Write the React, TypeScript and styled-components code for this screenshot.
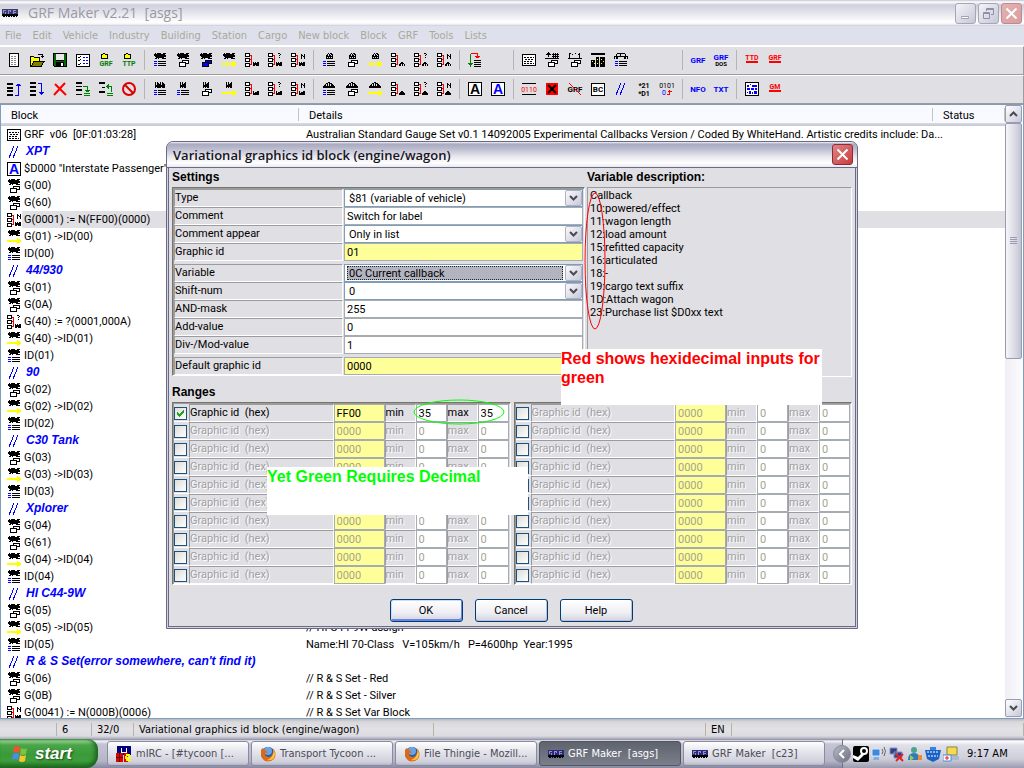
import React from "react";
import styled, { createGlobalStyle, css } from "styled-components";

const GlobalStyle = createGlobalStyle`
  * { box-sizing: border-box; }
  html, body { margin: 0; padding: 0; }
  body { background: #e0dfe3; color: #000; overflow: hidden; }
  button, input, select { font: inherit; color: inherit; margin: 0; padding: 0; border-radius: 0; }
`;

const SANS = `"Liberation Sans", Arial, sans-serif`;
const TEXT = `Roboto, "Liberation Sans", sans-serif`;
const TAHOMA = `"DejaVu Sans Condensed", "DejaVu Sans", sans-serif`;
const CAPTION = `"Open Sans", "Noto Sans", sans-serif`;

/* ---------- pixel drawings ---------- */

function runs(rows: string[], x: number, y: number) {
  let d = "";
  rows.forEach((row, j) => {
    for (const m of row.matchAll(/#+/g)) {
      d += `M${x + (m.index ?? 0)} ${y + j}h${m[0].length}v1h-${m[0].length}z`;
    }
  });
  return d;
}

type BitsProps = { rows: string[]; x?: number; y?: number; fill?: string };
const Bits = ({ rows, x = 0, y = 0, fill = "#000" }: BitsProps) => <path d={runs(rows, x, y)} fill={fill} />;

type Subject = "train" | "factory" | "works" | "house" | "station";

const BIG: Record<Subject, string[]> = {
  train: [".#.####..###", "###########.", "############", ".###########", "..########..", ".##.#...####"],
  works: [".#.#..#.#...", ".#.##.#.##..", ".#.####.###.", ".##########.", ".##########.", ".#.####.###."],
  factory: ["...#.#..#...", "...#.#.##...", "...#.####...", "...######...", "...######...", "...#.#.##..."],
  house: [".....#.##...", "....#.#.##..", "...##.##.#..", "...#######..", "...#.#.#.#..", "...#######.."],
  station: [".....##.....", "...##.###...", "..#.#.#.##..", ".##.#.#.###.", "############", "############"],
};
const SMALL: Record<Subject, string[]> = {
  train: ["#.#.##", "######", "######", "##.###"],
  works: ["#..#.#", "#.####", "######", "######"],
  factory: ["#...##", "#.####", "######", "######"],
  house: ["..##..", ".####.", "##.#.#", "##.#.#"],
  station: ["..##..", ".####.", "######", "######"],
};

type Kind = "list" | "cards" | "blueCards" | "arrow" | "tree" | "treeQ" | "treeN";

const IconSvg = styled.svg`
  display: block;
  width: 16px;
  height: 16px;
  shape-rendering: crispEdges;
  overflow: visible;
`;

const Lines = () => (
  <>
    <path d="M2 9h3v1h-3zM2 11h3v1h-3zM2 13h3v1h-3z" fill="#00f" />
    <path d="M6 9h8v1H6zM6 11h8v1H6zM6 13h8v1H6z" />
  </>
);
const Cards = ({ fill = "#fff" }: { fill?: string }) => (
  <>
    <path d="M7.500 8.500h6v3h-6z" fill={fill} stroke="#000" />
    <path d="M4.500 10.500h6v4h-6z" fill={fill} stroke="#000" />
  </>
);

function BlockIcon({ subject, kind }: { subject: Subject; kind: Kind }) {
  const tree = kind.startsWith("tree");
  return (
    <IconSvg viewBox="0 0 16 16" aria-hidden="true">
      {!tree && <Bits rows={BIG[subject]} x={2} y={1} />}
      {kind === "list" && <Lines />}
      {kind === "cards" && <Cards />}
      {kind === "blueCards" && <Cards fill="#00f" />}
      {kind === "arrow" && <path d="M1 11h10V9h1v1h2v1h1v2h-1v1h-2v1h-1v-2H1z" fill="#ff0" />}
      {tree && (
        <>
          <path d="M1.500 1.500h4v3h-4zM1.500 6.500h4v3h-4zM1.500 11.500h4v3h-4z" fill="#fff" stroke="#000" />
          <path d="M6 3h2v10H6v-1h1V8H6V7h1V4H6z" fill="#f00" />
          <Bits rows={SMALL[subject]} x={9} y={10} />
          {kind === "treeQ" && <Bits rows={["##.", "..#", ".#.", "...", ".#."]} x={11} y={1} />}
          {kind === "treeN" && <Bits rows={["#..#", "##.#", "#.##", "#..#", "#..#"]} x={11} y={2} />}
        </>
      )}
    </IconSvg>
  );
}

const Glyph = ({ children }: { children: React.ReactNode }) => (
  <IconSvg viewBox="0 0 16 16" aria-hidden="true">{children}</IconSvg>
);

const TINY = { fontFamily: "Roboto, sans-serif", fontWeight: "bold", textAnchor: "middle" as const };

type LabelIconProps = { text: string; color: string; size?: number; y?: number; bar?: boolean; children?: React.ReactNode };
const LabelIcon = ({ text, color, size = 8, y = 11, bar, children }: LabelIconProps) => (
  <Glyph>
    <text {...TINY} x="8" y={y} fontSize={size} fill={color}>{text}</text>
    {bar && <path d="M2 9h12v2H2z" fill="#f00" />}
    {children}
  </Glyph>
);

const FolderIcon = ({ text }: { text: string }) => (
  <Glyph>
    <path d="M3.500 2.500h1l1-1h1l1 1h2v4h-6z" fill="#ff0" stroke="#000" />
    <text {...TINY} x="8" y="14" fontSize="7" fill="#008000">{text}</text>
  </Glyph>
);

const icons: Record<string, React.ReactNode> = {
  new: <Glyph><path d="M3.500 1.500h9v13h-9z" fill="#fff" stroke="#000" /><path d="M5 4.500h6M5 6.500h6M5 8.500h6M5 10.500h6M5 12.500h6" stroke="#888" strokeDasharray="2 1" /></Glyph>,
  open: <Glyph><path d="M1.500 14.500v-10h3l1 1h5v4" fill="#ff0" stroke="#000" /><path d="M2 14.500l3-5h10l-3 5z" fill="#808000" stroke="#000" /><path d="M9 2.500h4v3M12 4.500h3" fill="none" stroke="#000" /></Glyph>,
  save: <Glyph><path d="M1 1h14v14H2l-1-1z" fill="#000" /><path d="M2 2h2v7h8V2h2v12h-2v-4H4v4H2z" fill="#006a00" /><path d="M4 2h8v6H4z" fill="#e8e8e8" /><path d="M9 11h2v3H9z" fill="#fff" /></Glyph>,
  props: <Glyph><path d="M1.500 2.500h13v12h-13z" fill="#fff" stroke="#000" /><path d="M3 5l1 1 2-2M3 8l1 1 2-2M3 12l1 1 2-2" stroke="#000" fill="none" /><path d="M8 5.500h5M8 8.500h5M8 11.500h5" stroke="#00f" strokeDasharray="2 1" /></Glyph>,
  grfFolder: <FolderIcon text="GRF" />,
  ttpFolder: <FolderIcon text="TTP" />,
  up: <Glyph><path d="M1 2h6v2H1zM1 6h6v2H1zM1 9h6v2H1zM1 13h6v2H1z" /><path d="M9 14.500h3.500V3M10 4.500h5M11 3.500h3" stroke="#00f" fill="none" /></Glyph>,
  down: <Glyph><path d="M1 1h6v2H1zM1 5h6v2H1zM1 9h6v2H1zM1 13h6v2H1z" /><path d="M9 2.500h3.500V14M10 11.500h5M11 12.500h3" stroke="#00f" fill="none" /></Glyph>,
  cross: <Glyph><path d="M3 3l11 11M13 2L2 14" stroke="#f00" strokeWidth="2" fill="none" shapeRendering="auto" /></Glyph>,
  insert: <Glyph><path d="M1 1h6v2H1zM1 5h6v1H1zM1 8h6v2H1zM1 13h6v1H1z" /><path d="M8 5.500h4.500V10M10 9.500h5M11 10.500h3M9 12.500h6M9 14.500h6" stroke="#008000" fill="none" /></Glyph>,
  extract: <Glyph><path d="M1 1h6v2H1zM1 10h6v2H1zM4 6h3v1H4z" /><path d="M8 5.500h5.500V11M10 3v5M9 4v3M9 12.500h6M9 14.500h6" stroke="#008000" fill="none" /></Glyph>,
  stop: <Glyph><g shapeRendering="auto" fill="none" stroke="#d80000" strokeWidth="2"><circle cx="8" cy="8" r="6" /><path d="M4 4l8 8" /></g></Glyph>,
  flow: <Glyph><path d="M3.500 2v10M1 11.500h5M2 12.500h3M3.500 13v2" stroke="#008000" fill="none" /><path d="M4 1.500h6.500V6M8 4.500h5M9 5.500h3" stroke="#f00" fill="none" /><path d="M7 8h7v1H7zM7 10h7v1H7zM7 12h7v1H7zM7 14h7v1H7z" /></Glyph>,
  info: <Glyph><path d="M1.500 2.500h13v11h-13z" fill="#fff" stroke="#000" /><path d="M3 5.500h10M4 7.500h9M3 9.500h9M3 11.500h10" stroke="#000" strokeDasharray="2 1" /></Glyph>,
  trees: <Glyph><path d="M4 0h1v1h1v1h1v1H5v2H4V3H2V2h1V1h1zM8 2h7v1H8zM8 4h7v1H8zM9 1h1v5H9zM11 1h1v5h-1zM13 1h1v5h-1zM1 6h14v1H1z" /><Cards /></Glyph>,
  canal: <Glyph><path d="M2 1h2v1H2zM5 2h1v1H5zM8 1h1v1H8zM11 2h1v1h-1zM2 2h1v4H2zM12 1h1v5h-1zM1 6h14v1H1z" /><Cards /></Glyph>,
  town: <Glyph><path d="M1 1h14v2H1zM1 8h4v7H1zM6 5h3v10H6zM10 5h5v10h-5z" /><path d="M2 9h1v1H2zM4 11h1v1H4zM7 7h1v1H7zM7 11h1v1H7zM11 7h1v1h-1zM13 9h1v1h-1zM11 11h1v1h-1z" fill="#ff0" /></Glyph>,
  car: <Glyph><path d="M4 1h8v1H4zM3 2h1v2H3zM12 2h1v2h-1zM1 4h14v1H1zM1 5h1v2H1zM14 5h1v2h-1zM3 5h2v2H3zM11 5h2v2h-2zM7 2h1v2H7z" /><Lines /></Glyph>,
  grfBlue: <LabelIcon text="GRF" color="#00f" />,
  grfDos: <LabelIcon text="GRF" color="#00f" y={8}><text {...TINY} x="8" y="14" fontSize="6">DOS</text></LabelIcon>,
  ttd: <LabelIcon text="TTD" color="#f00" size={7} y={8} bar />,
  grfRed: <LabelIcon text="GRF" color="#f00" size={7} y={8} bar />,
  gm: <LabelIcon text="GM" color="#f00" size={7} y={8} bar />,
  nfo: <LabelIcon text="NFO" color="#00f" />,
  txt: <LabelIcon text="TXT" color="#00f" />,
  textA: <Glyph><path d="M1.500 1.500h13v13h-13z" fill="#fff" stroke="#000" /><text x="8" y="13" fontSize="14" fontWeight="bold" textAnchor="middle" fontFamily="Liberation Sans, sans-serif">A</text></Glyph>,
  textABlue: <Glyph><path d="M1.500 1.500h13v13h-13z" fill="#fff" stroke="#000" /><text x="8" y="13" fontSize="14" fontWeight="bold" textAnchor="middle" fill="#00f" fontFamily="Liberation Sans, sans-serif">A</text></Glyph>,
  binary: <Glyph><path d="M1 2h14v1H1zM1 13h14v1H1z" /><text x="8" y="11" fontSize="7" textAnchor="middle" fill="#f00" fontFamily="Roboto, sans-serif">0110</text></Glyph>,
  redX: <Glyph><path d="M2 2h12v12H2z" fill="#f00" /><path d="M4 4l8 8M12 4l-8 8" stroke="#000" strokeWidth="2" fill="none" shapeRendering="auto" /></Glyph>,
  noGrf: <LabelIcon text="GRF" color="#000"><path d="M2 2l12 12" stroke="#f00" fill="none" shapeRendering="auto" /></LabelIcon>,
  bc: <Glyph><path d="M1.500 2.500h13v12h-13z" fill="#fff" stroke="#000" /><text {...TINY} x="8" y="11" fontSize="8">BC</text></Glyph>,
  slashes: <Glyph><path d="M3 14L8 2M7 14l5-12" stroke="#00f" fill="none" /></Glyph>,
  star: <Glyph><g {...TINY} fontSize="7"><text x="8" y="7">*21</text><text x="8" y="15">*D1</text></g></Glyph>,
  bits: <Glyph><g fontSize="7" textAnchor="middle" fontFamily="Roboto, sans-serif"><text x="8" y="7">0101</text><text x="5" y="14" fill="#00f">0</text></g><path d="M8 13.500h2.500V9M9 10.500h4" stroke="#f00" fill="none" /></Glyph>,
  grid: <Glyph><path d="M1.500 1.500h13v13h-13z" fill="#fff" stroke="#000" /><path d="M3 4h2v2H3zM6 3h1v1H6zM8 4h5v2H8zM3 7h3v2H3zM7 7h3v2H7zM11 7h2v2h-2zM5 10h2v3H5zM8 11h1v2H8zM10 10h3v3h-3zM3 11h1v1H3z" fill="#00f" /></Glyph>,
};

const KINDS: Kind[] = ["cards", "blueCards", "arrow", "tree", "treeQ", "treeN"];
const blk = (subject: Subject, kind: Kind) => <BlockIcon subject={subject} kind={kind} />;

/* ---------- application window ---------- */

const Desktop = styled.div`
  display: flex;
  flex-direction: column;
  height: 100vh;
  position: relative;
  overflow: hidden;
  font: 11px/13px ${TEXT};
`;

const TitleBar = styled.header`
  display: flex;
  align-items: center;
  flex: none;
  height: 26px;
  padding: 0 2px;
  gap: 10px;
  background: linear-gradient(#c4c3d3 0, #fff 2px, #cfcfdd 5px, #dcdce6 10px, #fff 22px, #f6f6fa 24px, #c8cad6 26px);
`;
const AppTitle = styled.h1`
  flex: 1;
  margin: 0;
  font: 500 14px/18px ${CAPTION};
  color: #9a99a3;
  white-space: pre;
`;
const CaptionButton = styled.button<{ $danger?: boolean; $faded?: boolean }>`
  display: grid;
  place-items: center;
  width: 21px;
  height: 21px;
  border: 1px solid ${p => (p.$danger ? (p.$faded ? "#b98b98" : "#8c2a3a") : "#a5a5b8")};
  border-radius: 3px;
  background: ${p =>
    p.$danger
      ? p.$faded
        ? "linear-gradient(135deg, #e3b3b3, #dc9c9c)"
        : "linear-gradient(135deg, #e08686, #c83c3c)"
      : "linear-gradient(135deg, #f4f4f8, #c6c7d6)"};
  svg { display: block; }
`;
const CaptionButtons = styled.div`
  display: flex;
  gap: 2px;
`;

const MenuBar = styled.nav`
  display: flex;
  flex: none;
  height: 20px;
  background: #dee1eb;
  border-bottom: 1px solid #fff;
  font: 11px/13px ${TAHOMA};
  color: #a9a89c;
`;
const MenuItem = styled.button`
  padding: 0 6px 0 5px;
  border: 0;
  background: none;
  white-space: pre;
`;

const Toolbar = styled.div`
  display: flex;
  align-items: center;
  flex: none;
  height: 29px;
  padding: 0 0 2px 2px;
  background: #e0dfe3;
  border-top: 1px solid #fff;
  border-bottom: 1px solid #9c9ba0;
  border-right: 1px solid #9c9ba0;
`;
const ToolButton = styled.button`
  display: grid;
  place-items: center;
  width: 23px;
  height: 22px;
  border: 0;
  background: none;
`;
const ToolGap = styled.span<{ $slots: number }>`
  width: ${p => p.$slots * 23}px;
`;
const ToolSeparator = styled.span`
  width: 1px;
  height: 20px;
  margin: 0 3px 0 4px;
  background: #b4b3b8;
`;

type ToolItem = [string, React.ReactNode] | "|" | number;
const pick = (...names: string[]): ToolItem[] => names.map(n => [n, icons[n]]);
const family = (subject: Subject, kinds: Kind[]): ToolItem[] => kinds.map(k => [`${subject} ${k}`, blk(subject, k)]);

const TOOLS_TOP: ToolItem[] = [
  ...pick("new", "open", "save", "props", "grfFolder", "ttpFolder"), "|",
  ...family("train", ["list", ...KINDS]), "|",
  ...family("house", ["list", "cards", "arrow", "tree", "treeQ", "treeN"]), "|",
  ...pick("flow"), 1, "|",
  ...pick("info", "trees", "canal", "town", "car"), 2, "|",
  ...pick("grfBlue", "grfDos"), "|", ...pick("ttd", "grfRed"),
];
const TOOLS_BOTTOM: ToolItem[] = [
  ...pick("up", "down", "cross", "insert", "extract", "stop"), "|",
  ...family("works", ["list"]), ...family("factory", ["list", "cards", "arrow", "tree", "treeQ", "treeN"]), "|",
  ...family("station", ["list", "cards", "arrow", "tree", "treeQ", "treeN"]), "|",
  ...pick("textA", "textABlue"), "|",
  ...pick("binary", "redX", "noGrf", "bc", "slashes", "star", "bits"), "|",
  ...pick("nfo", "txt"), "|", ...pick("grid", "gm"),
];

const ToolRow = ({ items }: { items: ToolItem[] }) => (
  <Toolbar role="toolbar">
    {items.map((it, i) =>
      it === "|" ? <ToolSeparator key={i} /> :
      typeof it === "number" ? <ToolGap key={i} $slots={it} /> :
      <ToolButton key={i} type="button" aria-label={it[0]}>{it[1]}</ToolButton>
    )}
  </Toolbar>
);

const ListFrame = styled.main`
  display: flex;
  flex: 1;
  min-height: 0;
  background: #fff;
  border: 1px solid #7f9db9;
`;
const ListBody = styled.div`
  flex: 1;
  overflow: hidden;
`;
const BlockTable = styled.table`
  width: 100%;
  table-layout: fixed;
  border-collapse: collapse;
  white-space: pre;
`;
const HeadCell = styled.th<{ $w?: number }>`
  width: ${p => (p.$w ? `${p.$w}px` : "auto")};
  height: 21px;
  padding: 0 10px;
  text-align: left;
  font-weight: normal;
  background: linear-gradient(90deg, transparent calc(100% - 1px), #c7c5b2 0) 0 3px / 100% 13px no-repeat, linear-gradient(#f9faff 18px, #d8dae4 18px, #c4c6d4 21px);
`;
const Row = styled.tr`
  height: 17px;
`;
const Cell = styled.td<{ $selected?: boolean }>`
  height: 17px;
  padding: 0 0 0 7px;
  overflow: visible;
  background: ${p => (p.$selected ? "#e0dfe3" : "none")};
`;
const BlockName = styled.div`
  display: flex;
  align-items: center;
  height: 17px;
  margin-left: -2px;
`;
const BlockText = styled.span<{ $note?: boolean; $selected?: boolean }>`
  flex: 1;
  padding-left: 2px;
  line-height: 17px;
  background: ${p => (p.$selected ? "#e0dfe3" : "none")};
  ${p => p.$note && css`font: italic bold 12px/17px ${SANS}; color: #00f; padding-left: 4px;`}
`;

const tCards = blk("train", "cards");
const tArrow = blk("train", "arrow");
const tList = blk("train", "list");
const ROWS: { icon: React.ReactNode; name: string; details?: string; note?: boolean; selected?: boolean }[] = [
  { icon: icons.info, name: "GRF  v06  [0F:01:03:28]", details: "Australian Standard Gauge Set v0.1 14092005 Experimental Callbacks Version / Coded By WhiteHand. Artistic credits include: Da..." },
  { icon: icons.slashes, name: "XPT", note: true },
  { icon: icons.textABlue, name: '$D000 "Interstate Passenger"' },
  { icon: tCards, name: "G(00)" },
  { icon: tCards, name: "G(60)" },
  { icon: blk("train", "treeN"), name: "G(0001) := N(FF00)(0000)", selected: true },
  { icon: tArrow, name: "G(01) ->ID(00)" },
  { icon: tList, name: "ID(00)" },
  { icon: icons.slashes, name: "44/930", note: true },
  { icon: tCards, name: "G(01)" },
  { icon: tCards, name: "G(0A)" },
  { icon: blk("train", "treeQ"), name: "G(40) := ?(0001,000A)" },
  { icon: tArrow, name: "G(40) ->ID(01)" },
  { icon: tList, name: "ID(01)" },
  { icon: icons.slashes, name: "90", note: true },
  { icon: tCards, name: "G(02)" },
  { icon: tArrow, name: "G(02) ->ID(02)" },
  { icon: tList, name: "ID(02)" },
  { icon: icons.slashes, name: "C30 Tank", note: true },
  { icon: tCards, name: "G(03)" },
  { icon: tArrow, name: "G(03) ->ID(03)" },
  { icon: tList, name: "ID(03)" },
  { icon: icons.slashes, name: "Xplorer", note: true },
  { icon: tCards, name: "G(04)" },
  { icon: tCards, name: "G(61)" },
  { icon: tArrow, name: "G(04) ->ID(04)" },
  { icon: tList, name: "ID(04)" },
  { icon: icons.slashes, name: "HI C44-9W", note: true },
  { icon: tCards, name: "G(05)" },
  { icon: tArrow, name: "G(05) ->ID(05)", details: "// HI C44-9W assign" },
  { icon: tList, name: "ID(05)", details: "Name:HI 70-Class   V=105km/h   P=4600hp  Year:1995" },
  { icon: icons.slashes, name: "R & S Set(error somewhere, can't find it)", note: true },
  { icon: tCards, name: "G(06)", details: "// R & S Set - Red" },
  { icon: tCards, name: "G(0B)", details: "// R & S Set - Silver" },
  { icon: blk("train", "treeN"), name: "G(0041) := N(000B)(0006)", details: "// R & S Set Var Block" },
];

const ScrollBar = styled.div`
  display: flex;
  flex-direction: column;
  justify-content: space-between;
  width: 18px;
  padding: 0 1px 1px 0;
  background: linear-gradient(90deg, #eeeef4, #fdfdff);
`;
const ScrollButton = styled.button`
  display: grid;
  place-items: center;
  width: 17px;
  height: 18px;
  border: 1px solid #9a9bb0;
  border-radius: 2px;
  background: linear-gradient(135deg, #fff, #c8c9d8);
`;
const ScrollTrack = styled.div`
  flex: 1;
`;
const ScrollThumb = styled.div`
  display: grid;
  place-items: center;
  width: 17px;
  height: 41%;
  border: 1px solid #9a9bb0;
  border-radius: 2px;
  background: linear-gradient(90deg, #f6f6fa, #d4d5e0 70%, #c2c3d2);
`;
const Chevron = ({ up }: { up?: boolean }) => (
  <svg width="9" height="6" viewBox="0 0 9 6" aria-hidden="true">
    <path d={up ? "M1 5l3.500-3.500L8 5" : "M1 1l3.500 3.500L8 1"} fill="none" stroke="#4a4a52" strokeWidth="2" />
  </svg>
);

const StatusBar = styled.footer`
  display: flex;
  align-items: center;
  flex: none;
  height: 20px;
  background: linear-gradient(#b9bac0 0, #d9d9dd 3px, #e2e1e5 10px, #dcdbe0 17px, #a8a8b8);
  font: 11px/13px ${TAHOMA};
`;
const StatusPane = styled.span<{ $w?: number }>`
  width: ${p => (p.$w ? `${p.$w}px` : "auto")};
  flex: ${p => (p.$w ? "none" : 1)};
  height: 13px;
  padding-left: 5px;
  border-right: 1px solid #b6b4a6;
  white-space: nowrap;
`;

/* ---------- taskbar ---------- */

const TaskBar = styled.div`
  display: flex;
  align-items: stretch;
  flex: none;
  height: 29px;
  background: linear-gradient(#787a94 0, #f4f4f8 2px, #c4c5d4 5px, #b4b5c6 22px, #8587a0 29px);
  font: 11px/13px ${TAHOMA};
`;
const StartButton = styled.button`
  display: flex;
  align-items: center;
  gap: 6px;
  width: 98px;
  margin-right: 9px;
  padding-left: 11px;
  border: 0;
  border-radius: 0 10px 12px 0;
  background: linear-gradient(#4f9a4f 0, #8fd08a 2px, #4aa548 6px, #3a9a3a 15px, #3d9e3a 22px, #1f6a22 29px);
  box-shadow: inset -3px -1px 4px #1c6420;
  color: #fff;
  font: italic bold 17px/20px ${SANS};
  text-shadow: 1px 1px 2px #1a4a1a;
`;
const Tasks = styled.div`
  display: flex;
  flex: 1;
  gap: 2px;
  align-items: center;
`;
const TaskButton = styled.button<{ $active?: boolean }>`
  display: flex;
  align-items: center;
  gap: 4px;
  flex: 0 1 142px;
  min-width: 0;
  height: 25px;
  padding: 0 8px;
  border: 1px solid ${p => (p.$active ? "#53555f" : "#8a8ba0")};
  border-radius: 3px;
  background: ${p => (p.$active ? "linear-gradient(#5f636e, #7b7f8b)" : "linear-gradient(#fff, #e8e8ef 8px, #d0d0dc 20px, #b4b4c6)")};
  color: ${p => (p.$active ? "#fff" : "#4c4b55")};
  text-align: left;
  white-space: pre;
  overflow: hidden;
  svg { flex: none; }
`;
const Tray = styled.div`
  display: flex;
  align-items: center;
  gap: 2px;
  width: 182px;
  border-left: 1px solid #70728a;
  background: linear-gradient(#787a94 0, #fff 2px, #e0e0ea 6px, #ceced9 20px, #9a9bb0 29px);
  svg { flex: none; }
`;
const TrayToggle = styled.button`
  display: grid;
  place-items: center;
  flex: none;
  width: 18px;
  height: 18px;
  margin-left: -10px;
  border: 1px solid #8a8b9c;
  border-radius: 50%;
  background: linear-gradient(135deg, #b8b9c6, #6e7080);
`;
const Clock = styled.time`
  margin-left: 6px;
  white-space: nowrap;
`;

const WindowsFlag = () => (
  <svg width="18" height="18" viewBox="0 0 18 18" aria-hidden="true">
    <path d="M3 2q3-2 6 0L8 8q-3-2-6 0z" fill="#f0522a" />
    <path d="M10 3q3 2 6 0l-1 6q-3 2-6 0z" fill="#7cc243" />
    <path d="M2 9q3-2 6 0l-1 6q-3-2-6 0z" fill="#4a8cf0" />
    <path d="M9 10q3 2 6 0l-1 6q-3 2-6 0z" fill="#fcc42c" />
  </svg>
);
const TrainLogo = ({ faded }: { faded?: boolean }) => (
  <svg width="16" height="16" viewBox="0 0 16 16" shapeRendering="crispEdges" aria-hidden="true">
    <path d="M0 4h5v6H0zM5 4h5v6H5zM10 4h6v6h-6z" fill={faded ? "#3c3c64" : "#2c2c6c"} />
    <path d="M1 5h3v1H1zM1 6h1v2H1zM3 7h1v2H3zM6 5h3v1H6zM6 6h1v3H6zM8 6h1v1H8zM11 5h3v1h-3zM11 6h1v3h-1zM12 7h2v1h-2z" fill="#8c8cf0" />
    <path d="M0 9h16v2H0zM1 11h2v1H1zM4 11h1v1H4zM6 11h2v1H6zM9 11h1v1H9zM11 11h2v1h-2zM14 11h1v1h-1z" />
  </svg>
);
const FirefoxLogo = () => (
  <svg width="16" height="16" viewBox="0 0 16 16" aria-hidden="true">
    <circle cx="8" cy="8" r="7" fill="#2a5aa8" />
    <circle cx="8" cy="5" r="4" fill="#6aa4e4" />
    <path d="M1 4Q0 15 8 15.500Q16 15 15.500 7Q15 4 13 2.500Q14 6 12 9Q10 12 7 10.500Q4 9 5 7L8 6.500L6 4.500Q4 5 3 2Q1.500 3 1 4z" fill="#e06a14" />
    <path d="M13 2.500Q17 8 13 13Q10 15 7 14Q12 12 13 8Q14 6 13 2.500z" fill="#fcc83a" />
  </svg>
);
const MircLogo = () => (
  <svg width="16" height="16" viewBox="0 0 16 16" shapeRendering="crispEdges" aria-hidden="true">
    <path d="M1 0h14v9H1z" fill="#000080" />
    <path d="M5 2h1v4h4V2h1v5H5z" fill="#fff" />
    <path d="M0 7h7v9H0zM8 7h4v9H8z" fill="#e00000" />
    <path d="M3 7h1v9H3zM0 11h7v1H0z" fill="#500" />
    <path d="M10 8h4v2h-3v1h4v2h-2v1h2v1h-5v-2h-1v-3h1z" fill="#ff0" />
  </svg>
);

const TrayIcons = () => (
  <>
    <svg width="16" height="16" viewBox="0 0 16 16" aria-hidden="true"><rect width="16" height="16" rx="2" fill="#000" /><circle cx="11" cy="5" r="3" fill="none" stroke="#fff" strokeWidth="2" /><path d="M0 9l5 2 4-4 2 2-4 4-2 2-5-3z" fill="#fff" /></svg>
    <svg width="16" height="16" viewBox="0 0 16 16" aria-hidden="true"><path d="M1 3h8v7H1z" fill="#3a8ae0" stroke="#dde6f4" /><path d="M3 11h5v3H2z" fill="#7ab0e8" /><path d="M11 3q2 2 0 5M13 1q3 4 0 9" fill="none" stroke="#666" /></svg>
    <svg width="16" height="16" viewBox="0 0 16 16" aria-hidden="true"><path d="M1 2h7v6H1zM5 6h8v6H5z" fill="#2f3f8c" stroke="#8a92b8" /><path d="M7 8l7 7M14 8l-7 7" stroke="#e82020" strokeWidth="2" /></svg>
    <svg width="16" height="16" viewBox="0 0 16 16" aria-hidden="true"><circle cx="7" cy="4" r="3" fill="#4aa58a" /><path d="M1 14q0-7 6-7t5 7z" fill="#2f7ab8" /><path d="M11 9h4v5h-4z" fill="#f08a30" /><path d="M3 9l4 3-4 3z" fill="#9ad04a" /></svg>
    <svg width="16" height="16" viewBox="0 0 16 16" aria-hidden="true"><path d="M0 4h16l-2 9-6 3-6-3z" fill="#1a62c8" /><path d="M5 1h6v3H5z" fill="#3a82e0" /><path d="M2 6h12M3 10h10" stroke="#fff" strokeDasharray="2 1" /></svg>
    <svg width="16" height="16" viewBox="0 0 16 16" aria-hidden="true"><path d="M4 1h10v8H4z" fill="#f4dc50" stroke="#8a8240" /><path d="M8 10h8v4H8z" fill="#a8b8d8" /><path d="M0 9h8v6H0z" fill="#fff" stroke="#4a8ae0" /><path d="M2 12h4M4 10v4" stroke="#e02020" /></svg>
  </>
);

/* ---------- dialog ---------- */

const DialogLayer = styled.div`
  position: absolute;
  inset: 0;
  display: flex;
  align-items: center;
  justify-content: center;
  padding-top: 2px;
`;
const Dialog = styled.section`
  position: relative;
  width: 692px;
  border: 1px solid #6a6a86;
  border-radius: 7px 7px 0 0;
  background: #e0dfe3;
  box-shadow: inset 0 0 0 1px #d4d4e0, inset 0 0 0 2px #6a6a86;
`;
const DialogTitle = styled.header`
  display: flex;
  align-items: center;
  justify-content: space-between;
  height: 26px;
  padding: 0 4px 0 6px;
  border-radius: 6px 6px 0 0;
  border-bottom: 1px solid #6a6a86;
  background: linear-gradient(#f4f4fa 0, #a9a9c0 2px, #bdbdd0 7px, #e9e9f0 15px, #fff 21px, #e8e8f0 25px);
`;
const DialogCaption = styled.h2`
  margin: 0;
  font: 600 13px/18px ${CAPTION};
  color: #16161e;
`;
const DialogBody = styled.form`
  padding: 2px 5px 6px 5px;
`;
const GroupTitle = styled.h3`
  margin: 0;
  padding-bottom: 3px;
  font: bold 12px/14px ${SANS};
`;
const UpperArea = styled.div`
  display: grid;
  grid-template-columns: 413px 1fr;
  column-gap: 2px;
  height: 215px;
`;
const Column = styled.div`
  display: flex;
  flex-direction: column;
`;
const SunkenPanel = styled.div`
  border: 1px solid;
  border-color: #77766e #fff #fff #77766e;
  box-shadow: inset 1px 1px 0 #9c9b94;
  padding: 1px 1px 0 1px;
`;
const SettingsGroup = styled.div`
  margin-bottom: 3px;
  &:last-child { margin-bottom: 0; }
`;
const SettingRow = styled.div`
  display: grid;
  grid-template-columns: 169px 1fr;
  column-gap: 1px;
  height: 18px;
`;
const LabelCell = styled.label<{ $disabled?: boolean }>`
  border: 1px solid;
  border-color: #9c9ba0 #fff #fff #9c9ba0;
  white-space: pre;
  overflow: hidden;
  line-height: 15px;
  ${p => p.$disabled && css`color: #a09fa4; text-shadow: 1px 1px 0 #fff;`}
`;
const Field = styled.input<{ $hex?: boolean }>`
  width: 100%;
  min-width: 0;
  height: 18px;
  padding: 0 2px;
  border: 1px solid #a5acb2;
  outline: none;
  background: ${p => (p.$hex ? "#ffff99" : "#fff")};
  &:disabled { color: #a5a48f; opacity: 1; }
`;
const SelectBox = styled.div`
  display: flex;
  position: relative;
  height: 18px;
  border: 1px solid #7f9db9;
  background: #fff;
`;
const Select = styled.select<{ $focused?: boolean }>`
  appearance: none;
  flex: 1;
  height: ${p => (p.$focused ? "14px" : "16px")};
  margin: ${p => (p.$focused ? "1px 19px 1px 2px" : "0 17px 0 0")};
  padding: 0 0 0 ${p => (p.$focused ? "1px" : "4px")};
  border: ${p => (p.$focused ? "1px dotted #222" : "0")};
  outline: none;
  background: ${p => (p.$focused ? "#b2b4bf" : "transparent")};
`;
const SelectArrow = styled.span`
  position: absolute;
  top: 0;
  right: 0;
  display: grid;
  place-items: center;
  width: 17px;
  height: 16px;
  border: 1px solid #b0b1c2;
  border-radius: 2px;
  background: linear-gradient(135deg, #fafafc, #c8c9d8);
  pointer-events: none;
`;
const DescriptionBox = styled.div`
  flex: none;
  height: 190px;
  padding: 1px 2px;
  border: 1px solid;
  border-color: #9c9ba0 #fff #fff #9c9ba0;
  white-space: pre;
`;
const RangeArea = styled.div`
  display: grid;
  grid-template-columns: 1fr 1fr;
  column-gap: 3px;
`;
const RangeRow = styled.div`
  display: grid;
  grid-template-columns: 15px 1fr 51px 31px 31px 31px 31px;
  height: 18px;
`;
const TickBox = styled.input`
  appearance: none;
  align-self: end;
  width: 13px;
  height: 13px;
  margin-bottom: 1px;
  border: 1px solid #1c5180;
  background: linear-gradient(135deg, #dcdcd7, #fff);
`;
const TickCell = styled.span`
  position: relative;
  display: flex;
  border: solid #fff;
  border-width: 0 0 1px 0;
  svg { position: absolute; left: 3px; top: 6px; pointer-events: none; }
`;
const DialogButtons = styled.div`
  display: flex;
  justify-content: center;
  gap: 12px;
  padding: 14px 2px 0 0;
`;
const PushButton = styled.button<{ $primary?: boolean }>`
  width: 73px;
  height: 23px;
  border: 1px solid #003c74;
  border-radius: 3px;
  background: linear-gradient(#fff, #f0f0f5 12px, #d4d4e0);
  box-shadow: ${p => (p.$primary ? "inset 1px 1px 0 #cfdcf8, inset -1px -2px 0 #6a86e0" : "inset -1px -1px 0 #c0c0d0")};
`;

const Note = styled.p<{ $x: number; $y: number; $h: number; $color: string }>`
  position: absolute;
  left: ${p => p.$x}px;
  top: ${p => p.$y}px;
  width: 261px;
  height: ${p => p.$h}px;
  margin: 0;
  background: #fff;
  color: ${p => p.$color};
  font: bold 16px/19px ${SANS};
`;
const Ring = styled.svg<{ $x: number; $y: number }>`
  position: absolute;
  left: ${p => p.$x}px;
  top: ${p => p.$y}px;
  pointer-events: none;
`;

type Setting = { label: string; value: string; kind?: "select" | "hex" | "focus" };
const SETTINGS: Setting[][] = [
  [
    { label: "Type", value: "$81 (variable of vehicle)", kind: "select" },
    { label: "Comment", value: "Switch for label" },
    { label: "Comment appear", value: "Only in list", kind: "select" },
    { label: "Graphic id", value: "01", kind: "hex" },
  ],
  [
    { label: "Variable", value: "0C Current callback", kind: "focus" },
    { label: "Shift-num", value: "0", kind: "select" },
    { label: "AND-mask", value: "255" },
    { label: "Add-value", value: "0" },
    { label: "Div-/Mod-value", value: "1" },
  ],
  [{ label: "Default graphic id", value: "0000", kind: "hex" }],
];
const DESCRIPTION = [
  "Callback", "10:powered/effect", "11:wagon length", "12:load amount", "15:refitted capacity",
  "16:articulated", "18:-", "19:cargo text suffix", "1D:Attach wagon", "23:Purchase list $D0xx text",
];

function SettingLine({ label, value, kind }: Setting) {
  const id = "set-" + label.replace(/\W+/g, "-");
  return (
    <SettingRow>
      <LabelCell htmlFor={id}>{label}</LabelCell>
      {kind === "select" || kind === "focus" ? (
        <SelectBox>
          <Select id={id} $focused={kind === "focus"} defaultValue={value}>
            <option>{value}</option>
          </Select>
          <SelectArrow><Chevron /></SelectArrow>
        </SelectBox>
      ) : (
        <Field id={id} $hex={kind === "hex"} defaultValue={value} />
      )}
    </SettingRow>
  );
}

function RangeLine({ id, active }: { id: string; active: boolean }) {
  const off = !active;
  return (
    <RangeRow>
      <TickCell>
        <TickBox id={`${id}-on`} type="checkbox" defaultChecked={active} />
        {active && (
          <svg width="7" height="7" viewBox="0 0 7 7" shapeRendering="crispEdges" aria-hidden="true">
            <Bits rows={["......#", ".....##", "#...###", "##.###.", "#####..", ".###...", "..#...."]} fill="#21a121" />
          </svg>
        )}
      </TickCell>
      <LabelCell htmlFor={`${id}-on`} $disabled={off}>Graphic id  (hex)</LabelCell>
      <Field $hex aria-label="Graphic id" disabled={off} defaultValue={active ? "FF00" : "0000"} />
      <LabelCell htmlFor={`${id}-min`} $disabled={off}>min</LabelCell>
      <Field id={`${id}-min`} disabled={off} defaultValue={active ? "35" : "0"} />
      <LabelCell htmlFor={`${id}-max`} $disabled={off}>max</LabelCell>
      <Field id={`${id}-max`} disabled={off} defaultValue={active ? "35" : "0"} />
    </RangeRow>
  );
}

const CloseMark = ({ color }: { color: string }) => (
  <svg width="13" height="13" viewBox="0 0 13 13" aria-hidden="true">
    <path d="M1.500 1.500l10 10M11.500 1.500l-10 10" stroke={color} strokeWidth="2" />
  </svg>
);

function VariationalDialog() {
  const lines = Array.from({ length: 10 }, (_, i) => i);
  return (
    <DialogLayer>
      <Dialog role="dialog" aria-labelledby="dialog-title">
        <DialogTitle>
          <DialogCaption id="dialog-title">Variational graphics id block (engine/wagon)</DialogCaption>
          <CaptionButton type="button" $danger aria-label="Close dialog"><CloseMark color="#fff" /></CaptionButton>
        </DialogTitle>
        <DialogBody onSubmit={e => e.preventDefault()}>
          <UpperArea>
            <Column>
              <GroupTitle>Settings</GroupTitle>
              <SunkenPanel>
                {SETTINGS.map((group, i) => (
                  <SettingsGroup key={i}>{group.map(s => <SettingLine key={s.label} {...s} />)}</SettingsGroup>
                ))}
              </SunkenPanel>
            </Column>
            <Column>
              <GroupTitle>Variable description:</GroupTitle>
              <DescriptionBox>{DESCRIPTION.map(t => <div key={t}>{t}</div>)}</DescriptionBox>
            </Column>
          </UpperArea>
          <div>
            <GroupTitle>Ranges</GroupTitle>
            <RangeArea>
              {["l", "r"].map(side => (
                <SunkenPanel key={side}>
                  {lines.map(i => <RangeLine key={i} id={`${side}${i}`} active={side === "l" && i === 0} />)}
                </SunkenPanel>
              ))}
            </RangeArea>
          </div>
          <DialogButtons>
            <PushButton type="submit" $primary>OK</PushButton>
            <PushButton type="button">Cancel</PushButton>
            <PushButton type="button">Help</PushButton>
          </DialogButtons>
        </DialogBody>
        <Note $x={394} $y={207} $h={56} $color="#f00">Red shows hexidecimal inputs for green</Note>
        <Note $x={100} $y={325} $h={48} $color="#0f0">Yet Green Requires Decimal</Note>
        <Ring $x={417} $y={50} width="23" height="138" viewBox="0 0 23 138" aria-hidden="true">
          <ellipse cx="11" cy="69" rx="10" ry="68" fill="none" stroke="#f00" />
        </Ring>
        <Ring $x={246} $y={257} width="92" height="26" viewBox="0 0 92 26" aria-hidden="true">
          <ellipse cx="46" cy="13" rx="45" ry="12" fill="none" stroke="#0f0" />
        </Ring>
      </Dialog>
    </DialogLayer>
  );
}

const MENUS = ["File", "Edit", "Vehicle", "Industry", "Building", "Station", "Cargo", "New block", "Block", "GRF", "Tools", "Lists"];

export default function App() {
  return (
    <Desktop>
      <GlobalStyle />
      <TitleBar>
        <TrainLogo faded />
        <AppTitle>GRF Maker v2.21  [asgs]</AppTitle>
        <CaptionButtons>
          <CaptionButton type="button" aria-label="Minimize"><svg width="13" height="13" viewBox="0 0 13 13"><path d="M2.500 9.500h7v2h-7z" fill="#fff" stroke="#a0a0b4" /></svg></CaptionButton>
          <CaptionButton type="button" aria-label="Restore"><svg width="13" height="13" viewBox="0 0 13 13"><path d="M4.500 4V1.500h7v6H9M1.500 5.500h6v6h-6zM1 6.500h7M4 2.500h8" fill="none" stroke="#8f90a8" /></svg></CaptionButton>
          <CaptionButton type="button" $danger $faded aria-label="Close"><CloseMark color="#fff" /></CaptionButton>
        </CaptionButtons>
      </TitleBar>
      <MenuBar>{MENUS.map(m => <MenuItem key={m} type="button">{m}</MenuItem>)}</MenuBar>
      <ToolRow items={TOOLS_TOP} />
      <ToolRow items={TOOLS_BOTTOM} />
      <ListFrame>
        <ListBody>
          <BlockTable>
            <thead>
              <tr>
                <HeadCell $w={298}>Block</HeadCell>
                <HeadCell>Details</HeadCell>
                <HeadCell $w={72}>Status</HeadCell>
              </tr>
            </thead>
            <tbody>
              {ROWS.map((r, i) => (
                <Row key={i}>
                  <Cell>
                    <BlockName>
                      {r.icon}
                      <BlockText $note={r.note} $selected={r.selected}>{r.name}</BlockText>
                    </BlockName>
                  </Cell>
                  <Cell $selected={r.selected}>{r.details}</Cell>
                  <Cell $selected={r.selected} />
                </Row>
              ))}
            </tbody>
          </BlockTable>
        </ListBody>
        <ScrollBar>
          <ScrollButton type="button" aria-label="Scroll up"><Chevron up /></ScrollButton>
          <ScrollTrack>
            <ScrollThumb>
              <svg width="7" height="8" viewBox="0 0 7 8" aria-hidden="true"><path d="M0 .5h7M0 2.500h7M0 4.500h7M0 6.500h7" stroke="#9a9bb0" /></svg>
            </ScrollThumb>
          </ScrollTrack>
          <ScrollButton type="button" aria-label="Scroll down"><Chevron /></ScrollButton>
        </ScrollBar>
      </ListFrame>
      <StatusBar>
        <StatusPane $w={57} />
        <StatusPane $w={35}>6</StatusPane>
        <StatusPane $w={42}>32/0</StatusPane>
        <StatusPane $w={300}>Variational graphics id block (engine/wagon)</StatusPane>
        <StatusPane />
        <StatusPane $w={26}>EN</StatusPane>
        <StatusPane $w={292} />
      </StatusBar>
      <TaskBar>
        <StartButton type="button"><WindowsFlag />start</StartButton>
        <Tasks>
          <TaskButton type="button"><MircLogo />mIRC - [#tycoon [...</TaskButton>
          <TaskButton type="button"><FirefoxLogo />Transport Tycoon ...</TaskButton>
          <TaskButton type="button"><FirefoxLogo />File Thingie - Mozill...</TaskButton>
          <TaskButton type="button" $active><TrainLogo />GRF Maker  [asgs]</TaskButton>
          <TaskButton type="button"><TrainLogo />GRF Maker  [c23]</TaskButton>
        </Tasks>
        <Tray>
          <TrayToggle type="button" aria-label="Show hidden icons">
            <svg width="8" height="10" viewBox="0 0 8 10" aria-hidden="true"><path d="M6 1L2 5l4 4" fill="none" stroke="#fff" strokeWidth="2" /></svg>
          </TrayToggle>
          <TrayIcons />
          <Clock>9:17 AM</Clock>
        </Tray>
      </TaskBar>
      <VariationalDialog />
    </Desktop>
  );
}
